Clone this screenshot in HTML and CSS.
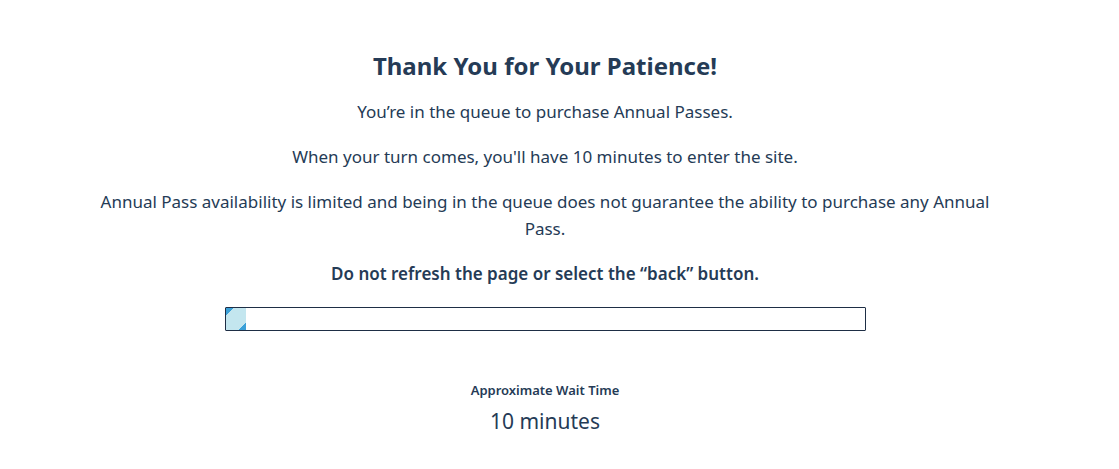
FILE: index.html
```html
<!DOCTYPE html>
<html>
<head>
<meta charset="utf-8">
<link rel="stylesheet" href="styles.css">
</head>
<body>
<main class="queue">
  <h1 class="title">Thank You for Your Patience!</h1>
  <p class="msg">You’re in the queue to purchase Annual Passes.</p>
  <p class="msg">When your turn comes, you'll have 10 minutes to enter the site.</p>
  <p class="msg wide">Annual Pass availability is limited and being in the queue does not guarantee the ability to purchase any Annual Pass.</p>
  <p class="msg warn">Do not refresh the page or select the “back” button.</p>
  <div class="bar"><div class="fill" style="width:20px"></div></div>
  <div class="wait-label">Approximate Wait Time</div>
  <div class="wait-value">10 minutes</div>
</main>
</body>
</html>
```
FILE: styles.css
```css
html, body { margin: 0; padding: 0; background: #fff; }
body { font-family: "Noto Sans", "Lato", sans-serif; color: #253b56; }
.queue {
  width: 1090px;
  display: flex;
  flex-direction: column;
  align-items: center;
  text-align: center;
  padding-top: 50px;
}
.title { font-size: 24px; font-weight: 700; margin: 0 0 16px; line-height: 32px; }
.msg { font-size: 17px; margin: 0 0 18px; line-height: 27px; }
.wide { width: 915px; }
.warn { font-weight: 600; margin-bottom: 20px; }
.bar {
  width: 639px; height: 22px;
  border: 1px solid #1e2e45;
  border-radius: 1px;
  margin-bottom: 50px;
  display: flex;
}
.fill {
  height: 100%;
  background:
    linear-gradient(135deg, #3aa0d8 0 5px, transparent 5px),
    linear-gradient(315deg, #3aa0d8 0 5px, transparent 5px),
    #c3e6ef;
}
.wait-label { font-size: 13px; font-weight: 600; line-height: 18px; margin-bottom: 8px; }
.wait-value { font-size: 21px; line-height: 28px; }
```
